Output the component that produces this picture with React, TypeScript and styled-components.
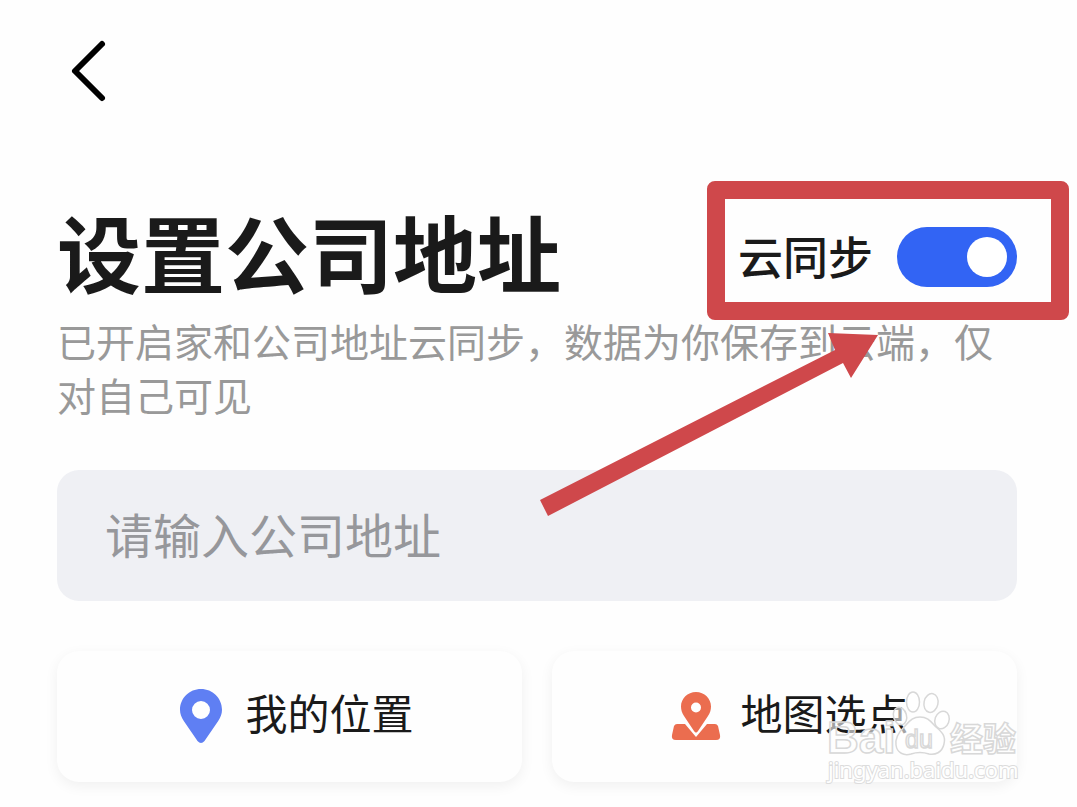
import React, { useState } from "react";
import styled, { createGlobalStyle } from "styled-components";

const GlobalStyle = createGlobalStyle`
  * { box-sizing: border-box; }
  body {
    margin: 0;
    background: #fefefe;
    color: #1a1a1a;
    font-family: "Noto Sans CJK SC", "Noto Sans", sans-serif;
  }
  button, input { font-family: inherit; }
`;

const Page = styled.main`
  position: relative;
  min-height: 100vh;
  padding: 36px 60px 24px 57px;
  overflow: hidden;
`;

const BackButton = styled.button`
  display: block;
  width: 60px;
  height: 70px;
  padding: 0;
  border: 0;
  background: none;
  color: #000;
`;

const TitleRow = styled.header`
  display: flex;
  align-items: center;
  justify-content: space-between;
  height: 110px;
  margin-top: 96px;
`;

const Title = styled.h1`
  align-self: flex-start;
  margin: 0;
  font-size: 84px;
  line-height: 98px;
  font-weight: 700;
  white-space: nowrap;
`;

const SyncGroup = styled.div`
  position: relative;
  z-index: 1;
  display: flex;
  align-items: flex-start;
  gap: 24px;
  height: 60px;
`;

const SyncLabel = styled.label`
  font-size: 45px;
  line-height: 58px;
  font-weight: 500;
  white-space: nowrap;
`;

const Switch = styled.input`
  appearance: none;
  display: flex;
  align-items: center;
  width: 120px;
  height: 60px;
  margin: 0;
  padding: 0 10px;
  border-radius: 30px;
  background: #c8ccd4;

  &::before {
    content: "";
    width: 40px;
    height: 40px;
    border-radius: 50%;
    background: #fff;
  }

  &:checked {
    justify-content: flex-end;
    background: #3264f4;
  }
`;

const Highlight = styled.div`
  position: absolute;
  inset: -46px -52px -33px -31px;
  border: 18px solid #cf484b;
  border-radius: 8px;
  pointer-events: none;
`;

const Arrow = styled.svg`
  position: absolute;
  top: 104px;
  right: 138px;
  width: 340px;
  height: 186px;
  pointer-events: none;
`;

const Description = styled.p`
  margin: 1px 0 0;
  font-size: 39px;
  line-height: 54px;
  color: #999;
`;

const AddressInput = styled.input`
  display: block;
  width: 100%;
  height: 131px;
  margin-top: 49px;
  padding: 0 48px 6px;
  border: 0;
  border-radius: 22px;
  background: #eff0f4;
  color: #1a1a1a;
  font-size: 48px;

  &::placeholder {
    color: #96979b;
    opacity: 1;
  }
`;

const Actions = styled.div`
  display: grid;
  grid-template-columns: 1fr 1fr;
  gap: 30px;
  margin-top: 50px;
`;

const ActionButton = styled.button`
  display: flex;
  align-items: center;
  justify-content: center;
  gap: 8px;
  height: 131px;
  padding: 0 0 1px;
  border: 0;
  border-radius: 22px;
  background: #fefefe;
  box-shadow: 0 4px 14px rgba(0, 0, 0, 0.06);
  color: #1a1a1a;
  font-size: 42px;
  line-height: 60px;
`;

const ActionText = styled.span`
  padding-bottom: 8px;
`;

const ActionIcon = styled.svg`
  flex: none;
  width: 72px;
  height: 60px;
`;

const Watermark = styled.svg`
  position: absolute;
  top: 686px;
  right: 50px;
  width: 202px;
  height: 104px;
  pointer-events: none;
`;

export default function App() {
  const [synced, setSynced] = useState(true);

  return (
    <>
      <GlobalStyle />
      <Page>
        <BackButton type="button" aria-label="返回">
          <svg width="60" height="70" viewBox="0 0 60 70" fill="none">
            <path
              d="M45 8L18 35L45 62"
              stroke="currentColor"
              strokeWidth="6"
              strokeLinecap="round"
              strokeLinejoin="round"
            />
          </svg>
        </BackButton>

        <TitleRow>
          <Title>设置公司地址</Title>
          <SyncGroup>
            <SyncLabel htmlFor="cloud-sync">云同步</SyncLabel>
            <Switch
              id="cloud-sync"
              type="checkbox"
              role="switch"
              checked={synced}
              onChange={(e) => setSynced(e.target.checked)}
            />
            <Highlight />
            <Arrow viewBox="0 0 340 186" aria-hidden="true">
              <path d="M1 169L296 19L289 2L339 4L312 47L304 32L9 185Z" fill="#cf484b" />
            </Arrow>
          </SyncGroup>
        </TitleRow>

        <Description>已开启家和公司地址云同步，数据为你保存到云端，仅对自己可见</Description>

        <AddressInput type="text" aria-label="公司地址" placeholder="请输入公司地址" />

        <Actions>
          <ActionButton type="button">
            <ActionIcon viewBox="0 0 72 60" aria-hidden="true">
              <path
                fillRule="evenodd"
                fill="#5f7ff3"
                d="M36 3C24.400 3 15 12.200 15 23.800C15 28 16.400 31.500 18.800 35L32.500 55Q36 59 39.500 55L53.200 35C55.600 31.500 57 28 57 23.800C57 12.200 47.600 3 36 3ZM36 15A9 9 0 1 1 36 33A9 9 0 1 1 36 15Z"
              />
            </ActionIcon>
            <ActionText>我的位置</ActionText>
          </ActionButton>
          <ActionButton type="button">
            <ActionIcon viewBox="0 0 72 60" aria-hidden="true">
              <path
                fill="#eb6d4f"
                d="M17 38H25L36 51L47 38H55Q57 38 58 40L60 49Q61 54 56 54H16Q11 54 12 49L14 40Q15 38 17 38Z"
              />
              <path
                fillRule="evenodd"
                fill="#eb6d4f"
                d="M36 6C27.500 6 21 12.600 21 20.500C21 24 22 27 24 30L34 45Q36 48 38 45L48 30C50 27 51 24 51 20.500C51 12.600 44.500 6 36 6ZM36 16.500A5 5 0 1 1 36 26.500A5 5 0 1 1 36 16.500Z"
              />
            </ActionIcon>
            <ActionText>地图选点</ActionText>
          </ActionButton>
        </Actions>

        <Watermark viewBox="0 0 202 104" aria-hidden="true">
          <g fill="#fff" fillOpacity="0.600" stroke="#d8d8d8" strokeWidth="1.500">
            <ellipse cx="88" cy="16" rx="6.500" ry="10" />
            <ellipse cx="106" cy="17" rx="7" ry="9.500" transform="rotate(12 106 17)" />
            <ellipse cx="75" cy="30" rx="6.500" ry="9" transform="rotate(-16 75 30)" />
            <ellipse cx="117" cy="34" rx="7" ry="9" transform="rotate(20 117 34)" />
            <path d="M95 31C103 31 106 36 111 41C117 46 121 50 119 58C117 67 110 69 104 68C98 66 92 66 86 68C79 70 72 67 71 59C70 52 74 46 79 41C84 36 87 31 95 31Z" />
            <g fontFamily="Liberation Sans, Arial, sans-serif" fontWeight="700">
              <text x="2" y="67" fontSize="44">Bai</text>
            </g>
            <text x="80" y="62" fontSize="25" fontFamily="Liberation Sans, Arial, sans-serif">du</text>
            <text x="125" y="65" fontSize="33" fontWeight="700">经验</text>
          </g>
          <text
            x="3"
            y="92"
            fontSize="22"
            fontFamily="Noto Sans, sans-serif"
            fill="#fff"
            stroke="#dcdcdc"
            strokeWidth="2"
            paintOrder="stroke"
          >
            jingyan.baidu.com
          </text>
        </Watermark>
      </Page>
    </>
  );
}
